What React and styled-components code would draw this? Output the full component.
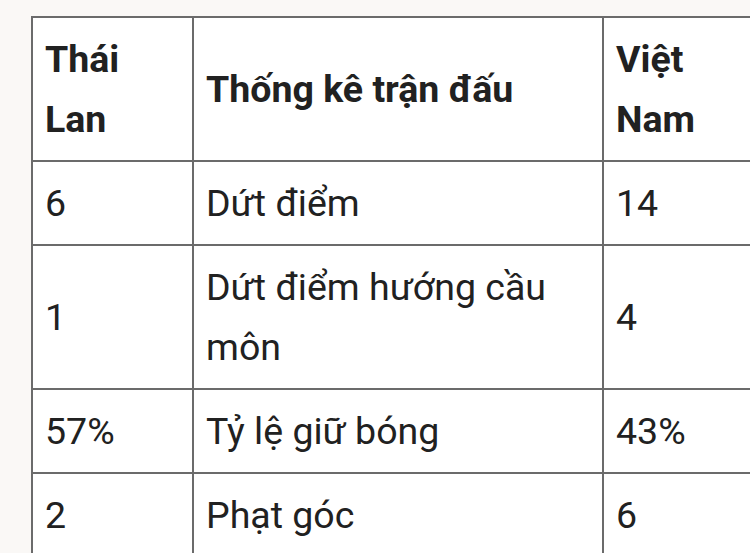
import React from "react";
import styled, { createGlobalStyle } from "styled-components";

const GlobalStyle = createGlobalStyle`
  html, body {
    margin: 0;
    padding: 0;
    background: #faf8f6;
    overflow: hidden;
  }
  body {
    font-family: Roboto, "Noto Sans", sans-serif;
    color: #212121;
  }
`;

const Page = styled.div`
  padding: 16px 0 0 31px;
  width: 900px;
`;

const Table = styled.table`
  border-collapse: collapse;
  background: #fff;
  table-layout: fixed;
  width: 733px;
  font-size: 37.5px;
  line-height: 60px;
`;

const Cell = styled.td`
  border: 2px solid #6b6b6b;
  padding: 11px 12px;
  vertical-align: middle;
  text-align: left;
  font-weight: ${(p) => (p.$head ? 700 : 400)};
`;

const rows = [
  ["6", "Dứt điểm", "14"],
  ["1", "Dứt điểm hướng cầu môn", "4"],
  ["57%", "Tỷ lệ giữ bóng", "43%"],
  ["2", "Phạt góc", "6"],
];

export default function App() {
  return (
    <>
      <GlobalStyle />
      <Page>
        <Table>
          <colgroup>
            <col style={{ width: 161 }} />
            <col style={{ width: 410 }} />
            <col style={{ width: 162 }} />
          </colgroup>
          <thead>
            <tr>
              <Cell as="th" $head>Thái Lan</Cell>
              <Cell as="th" $head>Thống kê trận đấu</Cell>
              <Cell as="th" $head>Việt Nam</Cell>
            </tr>
          </thead>
          <tbody>
            {rows.map((r, i) => (
              <tr key={i}>
                {r.map((c, j) => (
                  <Cell key={j}>{c}</Cell>
                ))}
              </tr>
            ))}
          </tbody>
        </Table>
      </Page>
    </>
  );
}
